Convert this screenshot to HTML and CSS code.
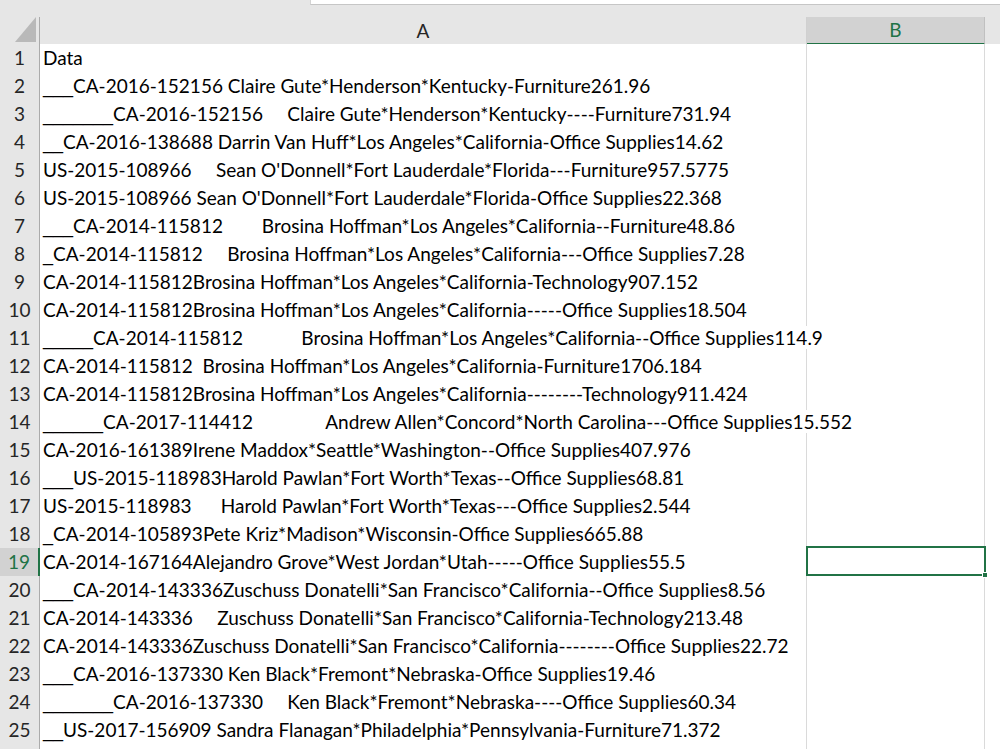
FILE: index.html
```html
<!DOCTYPE html>
<html>
<head>
<meta charset="utf-8">
<link rel="stylesheet" href="styles.css">
</head>
<body>
<div class="topstrip"><div class="spacer"></div><div class="fbar"></div></div>
<div class="sheet">
  <div class="row hdr">
    <div class="corner"><svg width="21" height="25" viewBox="0 0 21 25"><polygon points="0,25 21,25 21,0" fill="#b9b9b9"/></svg></div>
    <div class="ch">A</div>
    <div class="ch sel">B</div>
    <div class="ch last"></div>
  </div>
  <div class="row"><div class="rh">1</div><div class="ca"><span>Data</span></div><div class="cb"></div><div class="cc"></div></div>
  <div class="row"><div class="rh">2</div><div class="ca"><span><i class="u">___</i>CA-2016-152156 Claire Gute*Henderson*Kentucky-Furniture261.96</span></div><div class="cb"></div><div class="cc"></div></div>
  <div class="row"><div class="rh">3</div><div class="ca"><span><i class="u">_______</i>CA-2016-152156     Claire Gute*Henderson*Kentucky----Furniture731.94</span></div><div class="cb"></div><div class="cc"></div></div>
  <div class="row"><div class="rh">4</div><div class="ca"><span><i class="u">__</i>CA-2016-138688 Darrin Van Huff*Los Angeles*California-Office Supplies14.62</span></div><div class="cb"></div><div class="cc"></div></div>
  <div class="row"><div class="rh">5</div><div class="ca"><span>US-2015-108966     Sean O'Donnell*Fort Lauderdale*Florida---Furniture957.5775</span></div><div class="cb"></div><div class="cc"></div></div>
  <div class="row"><div class="rh">6</div><div class="ca"><span>US-2015-108966 Sean O'Donnell*Fort Lauderdale*Florida-Office Supplies22.368</span></div><div class="cb"></div><div class="cc"></div></div>
  <div class="row"><div class="rh">7</div><div class="ca"><span><i class="u">___</i>CA-2014-115812        Brosina Hoffman*Los Angeles*California--Furniture48.86</span></div><div class="cb"></div><div class="cc"></div></div>
  <div class="row"><div class="rh">8</div><div class="ca"><span><i class="u">_</i>CA-2014-115812     Brosina Hoffman*Los Angeles*California---Office Supplies7.28</span></div><div class="cb"></div><div class="cc"></div></div>
  <div class="row"><div class="rh">9</div><div class="ca"><span>CA-2014-115812Brosina Hoffman*Los Angeles*California-Technology907.152</span></div><div class="cb"></div><div class="cc"></div></div>
  <div class="row"><div class="rh">10</div><div class="ca"><span>CA-2014-115812Brosina Hoffman*Los Angeles*California-----Office Supplies18.504</span></div><div class="cb"></div><div class="cc"></div></div>
  <div class="row"><div class="rh">11</div><div class="ca"><span><i class="u">_____</i>CA-2014-115812            Brosina Hoffman*Los Angeles*California--Office Supplies114.9</span></div><div class="cb"></div><div class="cc"></div></div>
  <div class="row"><div class="rh">12</div><div class="ca"><span>CA-2014-115812  Brosina Hoffman*Los Angeles*California-Furniture1706.184</span></div><div class="cb"></div><div class="cc"></div></div>
  <div class="row"><div class="rh">13</div><div class="ca"><span>CA-2014-115812Brosina Hoffman*Los Angeles*California--------Technology911.424</span></div><div class="cb"></div><div class="cc"></div></div>
  <div class="row"><div class="rh">14</div><div class="ca"><span><i class="u">______</i>CA-2017-114412               Andrew Allen*Concord*North Carolina---Office Supplies15.552</span></div><div class="cb"></div><div class="cc"></div></div>
  <div class="row"><div class="rh">15</div><div class="ca"><span>CA-2016-161389Irene Maddox*Seattle*Washington--Office Supplies407.976</span></div><div class="cb"></div><div class="cc"></div></div>
  <div class="row"><div class="rh">16</div><div class="ca"><span><i class="u">___</i>US-2015-118983Harold Pawlan*Fort Worth*Texas--Office Supplies68.81</span></div><div class="cb"></div><div class="cc"></div></div>
  <div class="row"><div class="rh">17</div><div class="ca"><span>US-2015-118983      Harold Pawlan*Fort Worth*Texas---Office Supplies2.544</span></div><div class="cb"></div><div class="cc"></div></div>
  <div class="row"><div class="rh">18</div><div class="ca"><span><i class="u">_</i>CA-2014-105893Pete Kriz*Madison*Wisconsin-Office Supplies665.88</span></div><div class="cb"></div><div class="cc"></div></div>
  <div class="row"><div class="rh selr">19</div><div class="ca"><span>CA-2014-167164Alejandro Grove*West Jordan*Utah-----Office Supplies55.5</span></div><div class="cb active"><div class="handle"></div></div><div class="cc"></div></div>
  <div class="row"><div class="rh">20</div><div class="ca"><span><i class="u">___</i>CA-2014-143336Zuschuss Donatelli*San Francisco*California--Office Supplies8.56</span></div><div class="cb"></div><div class="cc"></div></div>
  <div class="row"><div class="rh">21</div><div class="ca"><span>CA-2014-143336     Zuschuss Donatelli*San Francisco*California-Technology213.48</span></div><div class="cb"></div><div class="cc"></div></div>
  <div class="row"><div class="rh">22</div><div class="ca"><span>CA-2014-143336Zuschuss Donatelli*San Francisco*California--------Office Supplies22.72</span></div><div class="cb"></div><div class="cc"></div></div>
  <div class="row"><div class="rh">23</div><div class="ca"><span><i class="u">___</i>CA-2016-137330 Ken Black*Fremont*Nebraska-Office Supplies19.46</span></div><div class="cb"></div><div class="cc"></div></div>
  <div class="row"><div class="rh">24</div><div class="ca"><span><i class="u">_______</i>CA-2016-137330     Ken Black*Fremont*Nebraska----Office Supplies60.34</span></div><div class="cb"></div><div class="cc"></div></div>
  <div class="row"><div class="rh">25</div><div class="ca"><span><i class="u">__</i>US-2017-156909 Sandra Flanagan*Philadelphia*Pennsylvania-Furniture71.372</span></div><div class="cb"></div><div class="cc"></div></div>
  <div class="row"><div class="rh"></div><div class="ca"></div><div class="cb"></div><div class="cc"></div></div>
</div>
</body>
</html>
```

FILE: styles.css
```css
* { box-sizing: border-box; }
html, body {
  margin: 0;
  padding: 0;
  width: 1000px;
  height: 749px;
  overflow: hidden;
  background: #e6e6e6;
  font-family: Lato, "Open Sans", sans-serif;
}
.topstrip {
  display: flex;
  height: 17px;
}
.spacer { width: 310px; }
.fbar {
  flex: 1;
  height: 5px;
  background: #fff;
  border-left: 1px solid #d4d4d4;
  border-bottom: 1px solid #c6c6c6;
}
.sheet {
  display: flex;
  flex-direction: column;
}
.row {
  display: grid;
  grid-template-columns: 40px 767px 178px 1fr;
  height: 28px;
}
.row.hdr { height: 27px; }
.corner {
  border-right: 1px solid #ababab;
  border-bottom: 1px solid #ababab;
  display: flex;
  align-items: flex-end;
  justify-content: flex-end;
  padding: 0 3px 2px 0;
}
.corner svg { display: block; }
.ch {
  background: #e6e6e6;
  border-bottom: 1px solid #ababab;
  border-right: 1px solid #d0d0d0;
  text-align: center;
  font-size: 19px;
  line-height: 27px;
  color: #262626;
}
.ch.sel {
  background: #d2d2d2;
  color: #217346;
  border-bottom: 2px solid #217346;
  border-right: 1px solid #c0c0c0;
  line-height: 26px;
}
.ch.last { border-right: none; }
.rh {
  background: #e6e6e6;
  border-right: 1px solid #ababab;
  border-bottom: 1px solid #d4d4d4;
  text-align: center;
  font-size: 19px;
  line-height: 28px;
  color: #262626;
}
.rh.selr {
  background: #d2d2d2;
  color: #217346;
  border-right: 2px solid #217346;
}
.ca, .cb, .cc {
  background: #fff;
  border-bottom: 1px solid #dadada;
  border-right: 1px solid #dadada;
}
.ca {
  position: relative;
  overflow: visible;
  white-space: pre;
  font-size: 19px;
  line-height: 28px;
  color: #000;
  padding-left: 3px;
  z-index: 1;
}
.ca span { background: #fff; }
.u {
  font-style: normal;
  font-family: "Liberation Sans", Arial, sans-serif;
  font-size: 18px;
  line-height: 20px;
}
.cb { position: relative; }
.cb.active {
  border: 2px solid #217346;
  margin: -2px 0 0 -1px;
  height: 30px;
  width: 180px;
  z-index: 2;
}
.handle {
  position: absolute;
  right: -4px;
  bottom: -4px;
  width: 6px;
  height: 6px;
  background: #217346;
  border: 1px solid #fff;
}
.cc { border-right: none; }
```
